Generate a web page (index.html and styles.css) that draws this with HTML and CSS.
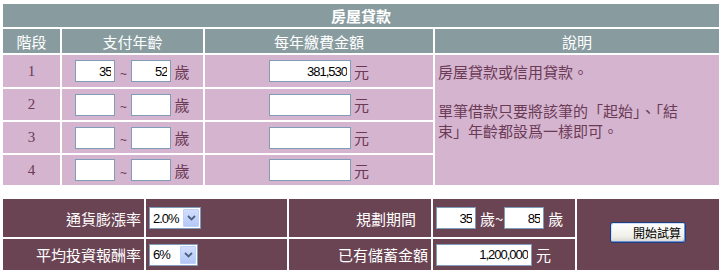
FILE: index.html
```html
<!DOCTYPE html>
<html lang="zh-Hant">
<head>
<meta charset="utf-8">
<title>房屋貸款</title>
<link rel="stylesheet" href="styles.css">
</head>
<body>
<div class="page">
  <div class="loan">
    <div class="title">房屋貸款</div>
    <div class="hd">階段</div>
    <div class="hd">支付年齡</div>
    <div class="hd">每年繳費金額</div>
    <div class="hd">說明</div>

    <div class="cell num">1</div>
    <div class="cell age"><input class="in in-age" type="text" value="35"><span class="tilde">~</span><input class="in in-age" type="text" value="52"><span class="unit">歲</span></div>
    <div class="cell amt"><input class="in in-amt" type="text" value="381,530"><span class="unit">元</span></div>
    <div class="cell desc">房屋貸款或信用貸款。<br><br>單筆借款只要將該筆的「起始」、「結<br>束」年齡都設爲一樣即可。</div>

    <div class="cell num">2</div>
    <div class="cell age"><input class="in in-age" type="text" value=""><span class="tilde">~</span><input class="in in-age" type="text" value=""><span class="unit">歲</span></div>
    <div class="cell amt"><input class="in in-amt" type="text" value=""><span class="unit">元</span></div>

    <div class="cell num">3</div>
    <div class="cell age"><input class="in in-age" type="text" value=""><span class="tilde">~</span><input class="in in-age" type="text" value=""><span class="unit">歲</span></div>
    <div class="cell amt"><input class="in in-amt" type="text" value=""><span class="unit">元</span></div>

    <div class="cell num">4</div>
    <div class="cell age"><input class="in in-age" type="text" value=""><span class="tilde">~</span><input class="in in-age" type="text" value=""><span class="unit">歲</span></div>
    <div class="cell amt"><input class="in in-amt" type="text" value=""><span class="unit">元</span></div>
  </div>

  <div class="params">
    <div class="pc lbl">通貨膨漲率</div>
    <div class="pc fld">
      <div class="sel sel-a"><span class="sel-val">2.0%</span><span class="sel-btn"><svg width="9" height="6" viewBox="0 0 9 6"><path d="M1 1 L4.5 4.5 L8 1" fill="none" stroke="#4d6185" stroke-width="1.8"/></svg></span></div>
    </div>
    <div class="pc lbl lbl-wide">規劃期間</div>
    <div class="pc fld"><input class="in in-age" type="text" value="35"><span class="unit u-tight">歲~</span><input class="in in-age" type="text" value="85"><span class="unit">歲</span></div>
    <div class="pc btncell"><button class="run" type="button">開始試算</button></div>

    <div class="pc lbl">平均投資報酬率</div>
    <div class="pc fld">
      <div class="sel sel-b"><span class="sel-val">6%</span><span class="sel-btn"><svg width="9" height="6" viewBox="0 0 9 6"><path d="M1 1 L4.5 4.5 L8 1" fill="none" stroke="#4d6185" stroke-width="1.8"/></svg></span></div>
    </div>
    <div class="pc lbl">已有儲蓄金額</div>
    <div class="pc fld"><input class="in in-save" type="text" value="1,200,000"><span class="unit">元</span></div>
  </div>
</div>
</body>
</html>
```

FILE: styles.css
```css
html, body {
  margin: 0;
  padding: 0;
  background: #ffffff;
}

body {
  font-family: "Liberation Sans", "Noto Sans CJK TC", sans-serif;
  font-size: 15px;
}

.page {
  padding: 4px 0 0 3px;
  width: 716px;
}

.loan {
  display: grid;
  grid-template-columns: 57px 141px 228px 284px;
  grid-template-rows: 23px 24px 32px 31px 31px 30px;
  gap: 2px;
}

.title {
  grid-column: 1 / -1;
  background: #889ca0;
  color: #ffffff;
  font-weight: bold;
  font-size: 15px;
  display: flex;
  align-items: center;
  justify-content: center;
}

.hd {
  background: #889ca0;
  color: #ffffff;
  font-size: 15px;
  display: flex;
  align-items: center;
  justify-content: center;
}

.cell {
  background: #d5b4d0;
  color: #6b3b55;
  display: flex;
  align-items: center;
}

.num {
  justify-content: center;
  font-family: "Liberation Serif", serif;
  font-size: 15px;
}

.age, .amt {
  justify-content: center;
}

.desc {
  grid-column: 4;
  grid-row: 3 / span 4;
  display: block;
  padding: 7px 3px;
  font-size: 15px;
  line-height: 19.5px;
  font-family: "Noto Sans CJK TC", sans-serif;
}

.in {
  box-sizing: border-box;
  height: 22px;
  border: 1px solid #7f9db9;
  background: #ffffff;
  margin: 0;
  padding: 0 3px 0 2px;
  text-align: right;
  font-family: "Liberation Sans", sans-serif;
  font-size: 13px;
  letter-spacing: -1px;
  color: #000000;
  outline: none;
}

.in-age { width: 40px; }
.in-amt { width: 82px; }
.in-save { width: 96px; }

.tilde {
  width: 16px;
  text-align: center;
  font-size: 12px;
  padding-top: 5px;
  color: #6b3b55;
}

.unit {
  margin-left: 3px;
  font-family: "Noto Sans CJK TC", sans-serif;
  font-size: 15px;
}

.params {
  margin-top: 14px;
  display: grid;
  grid-template-columns: 141px 141px 142px 142px 142px;
  grid-template-rows: 38px 31px;
  gap: 2px;
}

.pc {
  background: #6b4453;
  color: #ffffff;
  display: flex;
  align-items: center;
}

.lbl {
  justify-content: flex-end;
  padding-right: 3px;
  font-family: "Noto Sans CJK TC", sans-serif;
  font-size: 15px;
}

.lbl-wide {
  padding-right: 15px;
}

.fld {
  padding-left: 3px;
}

.fld .unit {
  color: #ffffff;
  margin-left: 4px;
}

.fld .u-tight {
  margin-right: 1px;
}

.btncell {
  grid-column: 5;
  grid-row: 1 / span 2;
  justify-content: center;
  padding-bottom: 4px;
}

.sel {
  box-sizing: border-box;
  height: 22px;
  display: flex;
  align-items: stretch;
  border: 1px solid #7f9db9;
  background: #ffffff;
  padding: 1px;
}

.sel-a { width: 52px; }
.sel-b { width: 49px; }

.sel-val {
  flex: 1;
  display: flex;
  align-items: center;
  padding-left: 2px;
  font-family: "Liberation Sans", sans-serif;
  font-size: 13px;
  letter-spacing: -1px;
  color: #000000;
}

.sel-btn {
  width: 16px;
  box-sizing: border-box;
  border: 1px solid #bcd0fa;
  border-radius: 1px;
  background: linear-gradient(#d2defd, #b4c8f6);
  display: flex;
  align-items: center;
  justify-content: center;
}

.run {
  box-sizing: border-box;
  width: 76px;
  height: 21px;
  margin: 0;
  padding: 0 4px 0 0;
  text-align: right;
  font-family: "Noto Sans CJK TC", sans-serif;
  font-size: 12px;
  line-height: 19px;
  color: #000000;
  border: 1px solid #1c3f80;
  border-radius: 3px;
  background: linear-gradient(#ffffff, #f0f0ea 70%, #d8d8d0);
  box-shadow: inset 1px 1px 0 #ceddfa, inset -1px -1px 0 #6d8fd6;
}
```
